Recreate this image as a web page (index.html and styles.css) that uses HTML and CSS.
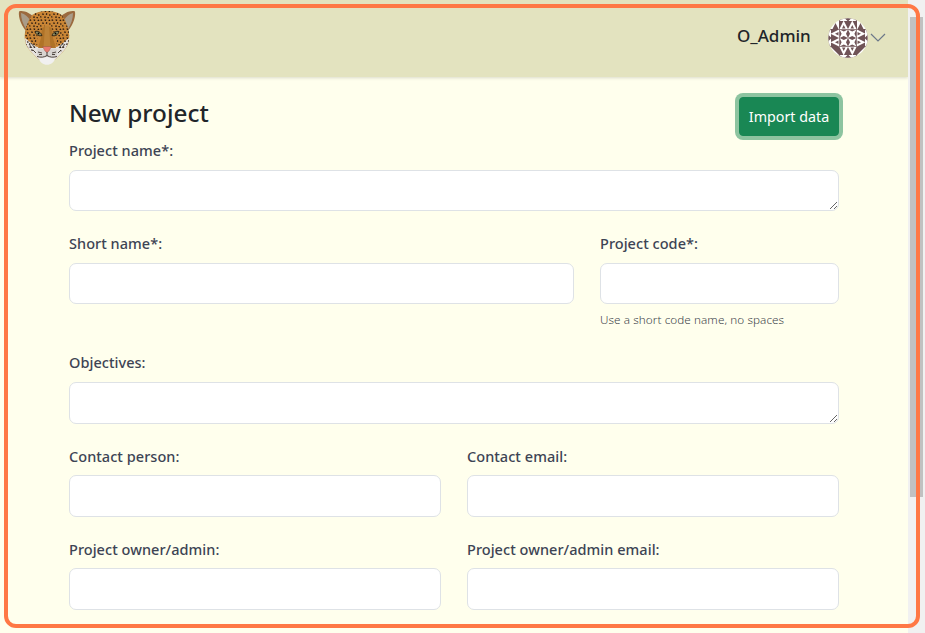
FILE: index.html
```html
<!DOCTYPE html>
<html lang="en">
<head>
<meta charset="utf-8">
<title>New project</title>
<link rel="stylesheet" href="styles.css">
</head>
<body>
<div class="page">
  <header class="topbar">
    <svg class="logo" viewBox="0 0 58 56" width="58" height="56">
      <defs>
        <pattern id="spots" width="11" height="9" patternUnits="userSpaceOnUse">
          <path d="M0 1l1.600-.8.900 1-1 .7zM4.600.3l1.800.4-.4 1.200-1.300-.2zM8.400 1l1.400-.5.600 1.200-1.500.5zM2 3.600l1.600-.2.400 1.300-1.500.4zM6.200 3l1.300.8-.6 1.300-1.200-.6zM9.400 4l1.200.4-.4 1.500-1.100-.4zM.2 6.100l1.300.3-.2 1.400-1.100-.2zM4 6.700l1.600-.4.300 1.400-1.400.3zM7.600 6.900l1.500.2-.6 1.400-1.200-.4z" fill="#2a1b10"/>
        </pattern>
      </defs>
      <path d="M1 1.500C5 0 13 3 16 8L9 22C4 17 0 8 1 1.500zM57 1.500C53 0 45 3 42 8l7 14c5-5 9-14 8-20.500z" fill="#9b6a3e"/>
      <path d="M3 3c4 1 7 4 9 7l-4 9C5 14 3 9 3 3zM55 3c-4 1-7 4-9 7l4 9c3-5 5-10 5-16z" fill="#a99c88"/>
      <path d="M29 1c8 0 14 2 17 7 4 8 6 15 5 22-1 9-8 13-12 18-3 4-17 4-20 0C15 43 8 39 7 30 6 23 8 16 12 8c3-5 9-7 17-7z" fill="#c98535"/>
      <path d="M7 28l6 5 6 4 10-2 10 2 6-4 6-5c0 10-8 15-12 20-3 4-17 4-20 0C15 43 7 38 7 28z" fill="#e5e2de"/>
      <path d="M29 1c8 0 14 2 17 7 4 8 6 15 5 22-1 6-4 9-8 12l-5-9 1-9-6-3-2-7h-4l-2 7-6 3 1 9-5 9c-4-3-7-6-8-12-1-7 1-14 5-22 3-5 9-7 17-7z" fill="url(#spots)"/>
      <path d="M24 18l5-2 5 2 1 10 3 10H20l3-10z" fill="#b07328"/>
      <path d="M27 16h4l1.500 22h-7z" fill="#bd8237"/>
      <path d="M17 21.500c3-1 6 1 7 4-3 1-6-.5-7-4zm24 0c-3-1-6 1-7 4 3 1 6-.5 7-4z" fill="#8f8e62" stroke="#302414" stroke-width="1"/>
      <circle cx="20.500" cy="23.500" r=".9"/><circle cx="37.500" cy="23.500" r=".9"/>
      <path d="M19 40c3-3 7-1 10 2 3-3 7-5 10-2v6l-10 1-10-1z" fill="#d8d4d1"/>
      <path d="M24.500 36.500h9L31 41l-2 1.500-2-1.500z" fill="#e87970" stroke="#85513b" stroke-width=".4"/>
      <path d="M29 42v3.500m-10 1c4 1 7 1 10-1 3 2 6 2 10 1" fill="none" stroke="#3b302b" stroke-width=".9"/>
      <path d="M20 42l4 1m-3 1.500h3m14-2.500l-4 1m3 1.500h-3M11 34l3 4m-1-5l4 5m-2 2l3 3m29-9l-3 4m1-5l-4 5m2 2l-3 3" fill="none" stroke="#3f352f" stroke-width=".9"/>
      <path d="M21 48c4 1 6-1 8-1s4 2 8 1c-1 9-15 9-16 0z" fill="#f1f0f0"/>
    </svg>
    <div class="account">
      <span class="user">O_Admin</span>
      <svg class="avatar" viewBox="-20 -20 40 40" width="40" height="40">
        <defs>
          <clipPath id="round"><circle r="19.700"/></clipPath>
          <path id="star" d="M-4.200-4.200L0-2.200 4.200-4.200 2.200 0 4.200 4.200 0 2.200-4.200 4.200-2.200 0z"/>
          <g id="edge">
            <path d="M-9-8.500v-11.500h18v11.500z" fill="#6f5357"/>
            <path d="M-8.500-9l4.200-8.500 4.300 8.500zM0-9l4.300-8.500 4.200 8.500z" fill="#fff"/>
            <path d="M-6-9.500l1.700-3.500 1.800 3.500zM2.500-9.500l1.800-3.500 1.700 3.500z" fill="#6f5357"/>
            <path d="M-8.500-17l3-3h2l3 3zM.5-17l3-3h2l3 3z" fill="#fff"/>
          </g>
        </defs>
        <g clip-path="url(#round)">
          <path d="M-20-20h40v40h-40z" fill="#fff"/>
          <path d="M-8.500-8.500h17v17h-17z" fill="#6f5357"/>
          <g fill="#fff"><use href="#star" x="-4.200" y="-4.200"/><use href="#star" x="4.200" y="-4.200"/><use href="#star" x="-4.200" y="4.200"/><use href="#star" x="4.200" y="4.200"/></g>
          <use href="#edge"/><use href="#edge" transform="rotate(90)"/><use href="#edge" transform="rotate(180)"/><use href="#edge" transform="rotate(270)"/>
          <path d="M-15.500-9l3-6 3 6zM15.500-9l-3-6-3 6zM-17 9h8v8zM17 9H9v8z" fill="#6f5357"/>
        </g>
      </svg>
      <svg class="chevron" viewBox="0 0 16 10" width="16" height="10"><path d="M1 1l7 7 7-7" fill="none" stroke="#6c7889" stroke-width="1.200"/></svg>
    </div>
  </header>
  <main class="content">
    <div class="heading">
      <h1>New project</h1>
      <button class="import" type="button">Import data</button>
    </div>
    <form class="form">
      <div class="field full upper"><label for="name">Project name*:</label><textarea id="name"></textarea></div>
      <div class="field short upper"><label for="short">Short name*:</label><input id="short"></div>
      <div class="field code upper"><label for="code">Project code*:</label><input id="code"><small>Use a short code name, no spaces</small></div>
      <div class="field full objectives"><label for="objectives">Objectives:</label><textarea id="objectives"></textarea></div>
      <div class="field left"><label for="person">Contact person:</label><input id="person"></div>
      <div class="field right"><label for="email">Contact email:</label><input id="email"></div>
      <div class="field left"><label for="owner">Project owner/admin:</label><input id="owner"></div>
      <div class="field right"><label for="owner-email">Project owner/admin email:</label><input id="owner-email"></div>
    </form>
  </main>
</div>
<div class="scrollbar"><div class="thumb"></div></div>
<div class="frame"></div>
</body>
</html>
```

FILE: styles.css
```css
* { box-sizing: border-box; }
body {
  margin: 0;
  height: 633px;
  overflow: hidden;
  display: flex;
  position: relative;
  background: #ffffed;
  color: #212529;
  font-family: "Noto Sans", "Open Sans", sans-serif;
}
.page { width: 908px; height: 633px; overflow: hidden; }
.topbar {
  height: 77px;
  padding: 10px 22px 0 18px;
  display: flex;
  justify-content: space-between;
  align-items: flex-start;
  background: #e3e3bf;
  box-shadow: 0 1px 3px rgba(0, 0, 0, .15);
}
.logo, .avatar, .chevron { display: block; }
.account { display: flex; align-items: center; padding-top: 8px; }
.user { font-size: 17px; font-weight: 500; line-height: 24px; width: 74px; margin: -5px 17px 0 0; white-space: nowrap; }
.chevron { margin-left: 2px; }
.content { padding: 16px 69px 0; }
.heading { height: 64px; display: flex; justify-content: space-between; }
h1 { margin: 3px 0 0; font-size: 24.300px; line-height: 34px; font-weight: 500; }
.import {
  width: 100px;
  height: 39px;
  margin: 4px 0 0;
  padding: 1px 0 0;
  border: 1px solid #198754;
  border-radius: 4px;
  background: #198754;
  color: #fff;
  font: 14.300px/24px "Noto Sans", sans-serif;
  white-space: nowrap;
  box-shadow: 0 0 0 4px #8dc4a0;
}
.form { display: grid; grid-template-columns: repeat(770, 1px); margin-top: -18px; }
.field { display: flex; flex-direction: column; height: 93px; }
.full { grid-column: 1 / -1; }
.short { grid-column: 1 / 506; }
.code { grid-column: 532 / -1; }
.field.code { height: 119px; }
.left { grid-column: 1 / 373; }
.right { grid-column: 399 / -1; }
label { height: 31px; font-size: 14.500px; letter-spacing: .04px; line-height: 24px; font-weight: 500; color: #3d4454; white-space: nowrap; }
.upper label, .objectives label { height: 32px; margin-top: -1px; }
input, textarea {
  display: block;
  width: 100%;
  height: 42px;
  margin: 0;
  padding: 8px 12px;
  border: 1px solid #dee2e6;
  border-radius: 7px;
  background: #fff;
}
.upper input, .upper textarea { height: 41px; }
textarea { resize: vertical; overflow: hidden; }
small { margin-top: 6px; font-size: 11.700px; letter-spacing: .08px; line-height: 18px; font-weight: 350; color: #3d434b; white-space: nowrap; }
.scrollbar { width: 17px; height: 633px; padding: 17px 2px; background: #f1f1f1; }
.thumb { height: 480px; background: #c1c1c1; }
.frame { position: absolute; left: 4px; top: 4px; width: 916px; height: 624px; border: 4px solid #ff7845; border-radius: 12px; pointer-events: none; }
```
